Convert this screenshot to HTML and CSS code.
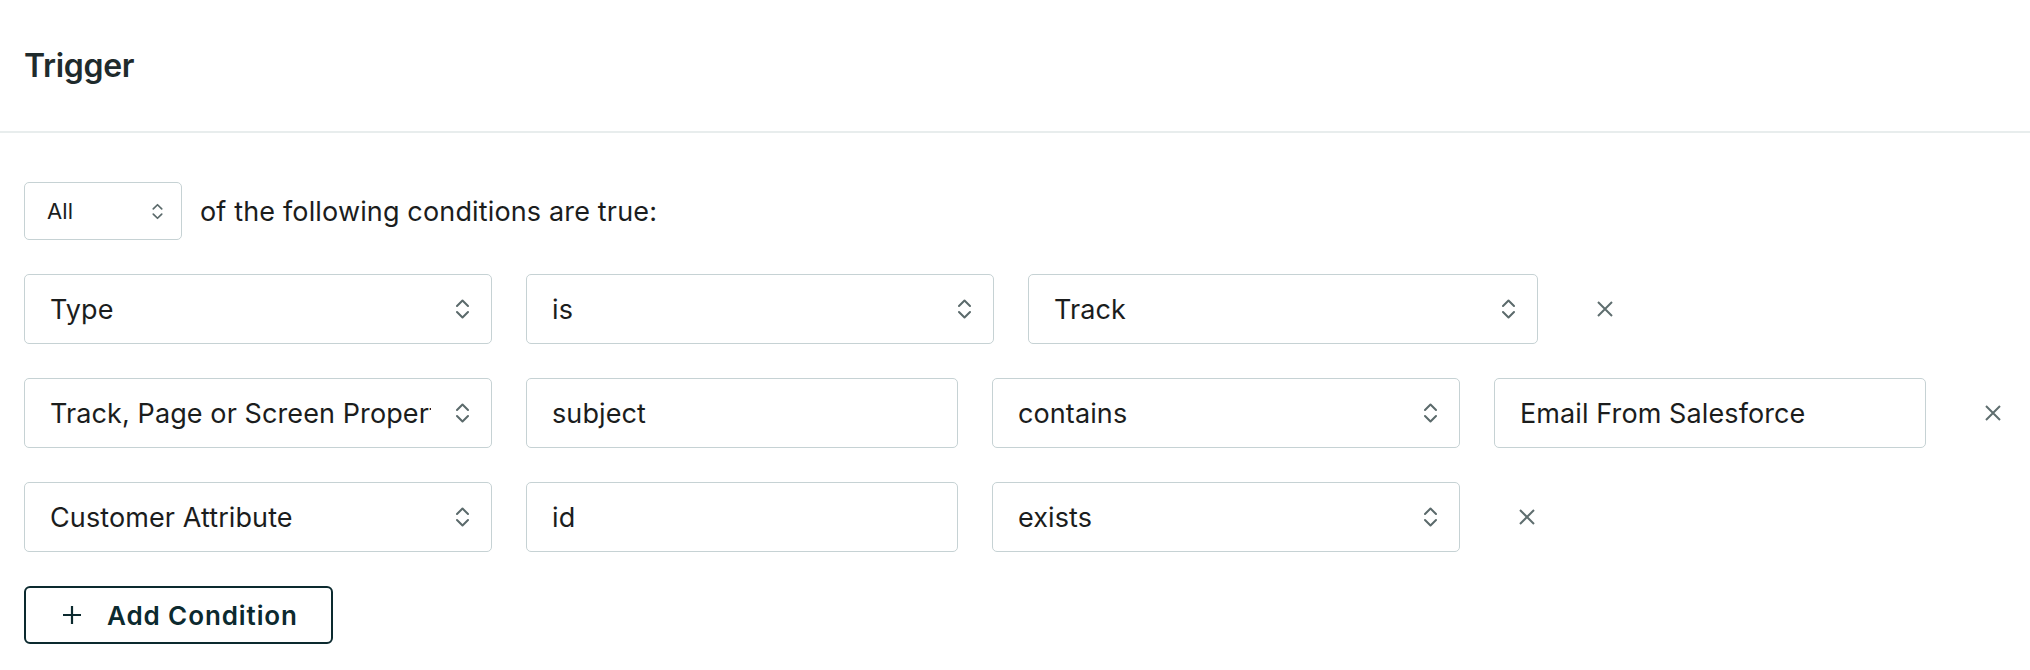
FILE: index.html
```html
<!DOCTYPE html>
<html lang="en">
<head>
<meta charset="utf-8">
<title>Trigger</title>
<link rel="stylesheet" href="styles.css">
</head>
<body>
<div class="panel">
  <header class="panel-header">
    <h2 class="panel-title">Trigger</h2>
  </header>
  <section class="panel-body">
    <div class="match-row">
      <div class="field select small w-all">
        <span class="field-text">All</span>
        <svg class="chev chev-sm" viewBox="0 0 13 20"><path d="M1.5 7 L6.5 2 L11.5 7 M1.5 13 L6.5 18 L11.5 13"/></svg>
      </div>
      <span class="match-text">of the following conditions are true:</span>
    </div>

    <div class="cond-row">
      <div class="field select w-468">
        <span class="field-text">Type</span>
        <svg class="chev" viewBox="0 0 13 20"><path d="M1 7 L6.5 1.5 L12 7 M1 13 L6.5 18.5 L12 13"/></svg>
      </div>
      <div class="field select w-468">
        <span class="field-text">is</span>
        <svg class="chev" viewBox="0 0 13 20"><path d="M1 7 L6.5 1.5 L12 7 M1 13 L6.5 18.5 L12 13"/></svg>
      </div>
      <div class="field select w-510">
        <span class="field-text">Track</span>
        <svg class="chev" viewBox="0 0 13 20"><path d="M1 7 L6.5 1.5 L12 7 M1 13 L6.5 18.5 L12 13"/></svg>
      </div>
      <button class="remove" type="button" aria-label="Remove condition">
        <svg viewBox="0 0 16 16"><path d="M1 1 L15 15 M15 1 L1 15"/></svg>
      </button>
    </div>

    <div class="cond-row">
      <div class="field select w-468">
        <span class="field-text">Track, Page or Screen Property</span>
        <svg class="chev" viewBox="0 0 13 20"><path d="M1 7 L6.5 1.5 L12 7 M1 13 L6.5 18.5 L12 13"/></svg>
      </div>
      <div class="field input w-432">
        <span class="field-text">subject</span>
      </div>
      <div class="field select w-468">
        <span class="field-text">contains</span>
        <svg class="chev" viewBox="0 0 13 20"><path d="M1 7 L6.5 1.5 L12 7 M1 13 L6.5 18.5 L12 13"/></svg>
      </div>
      <div class="field input w-432">
        <span class="field-text">Email From Salesforce</span>
      </div>
      <button class="remove" type="button" aria-label="Remove condition">
        <svg viewBox="0 0 16 16"><path d="M1 1 L15 15 M15 1 L1 15"/></svg>
      </button>
    </div>

    <div class="cond-row">
      <div class="field select w-468">
        <span class="field-text">Customer Attribute</span>
        <svg class="chev" viewBox="0 0 13 20"><path d="M1 7 L6.5 1.5 L12 7 M1 13 L6.5 18.5 L12 13"/></svg>
      </div>
      <div class="field input w-432">
        <span class="field-text">id</span>
      </div>
      <div class="field select w-468">
        <span class="field-text">exists</span>
        <svg class="chev" viewBox="0 0 13 20"><path d="M1 7 L6.5 1.5 L12 7 M1 13 L6.5 18.5 L12 13"/></svg>
      </div>
      <button class="remove" type="button" aria-label="Remove condition">
        <svg viewBox="0 0 16 16"><path d="M1 1 L15 15 M15 1 L1 15"/></svg>
      </button>
    </div>

    <div class="actions">
      <button class="add-btn" type="button">
        <svg class="plus" viewBox="0 0 18 18"><path d="M9 0 V18 M0 9 H18"/></svg>
        <span>Add Condition</span>
      </button>
    </div>
  </section>
</div>
</body>
</html>
```

FILE: styles.css
```css
* { box-sizing: border-box; }

html, body {
  margin: 0;
  padding: 0;
  background: #ffffff;
}

body {
  font-family: Inter, "Noto Sans", "Liberation Sans", sans-serif;
  color: #1b1d1d;
}

.panel-header {
  height: 133px;
  padding: 0 24px;
  display: flex;
  align-items: center;
  border-bottom: 2px solid #e8eded;
}

.panel-title {
  margin: 0;
  font-size: 32px;
  font-weight: 600;
  color: #1f2b2c;
  letter-spacing: -0.3px;
}

.panel-body {
  padding: 49px 24px 0;
  display: flex;
  flex-direction: column;
  gap: 34px;
}

.match-row {
  display: flex;
  align-items: center;
  gap: 18px;
}

.match-text {
  font-size: 27px;
  letter-spacing: 0.15px;
  color: #1b1d1d;
}

.cond-row {
  display: flex;
  align-items: center;
  gap: 34px;
}

.field {
  height: 70px;
  border: 1.5px solid #c6d2d4;
  border-radius: 5px;
  background: #fff;
  display: flex;
  align-items: center;
  padding: 0 24px 0 25px;
  font-size: 27px;
  letter-spacing: 0.1px;
  color: #1b1d1d;
  flex: none;
}

.field.select {
  padding-right: 22px;
  gap: 25px;
}

.field-text {
  flex: 1;
  min-width: 0;
  white-space: nowrap;
  overflow: hidden;
}

.field.small {
  height: 58px;
  font-size: 22px;
  padding: 0 18px 0 22px;
}

.w-all { width: 158px; }
.w-468 { width: 468px; }
.w-432 { width: 432px; }
.w-510 { width: 510px; }

.chev {
  width: 13px;
  height: 20px;
  flex: none;
  fill: none;
  stroke: #5b6a6b;
  stroke-width: 2;
  stroke-linecap: round;
  stroke-linejoin: round;
}

.chev-sm {
  width: 11px;
  height: 17px;
}

.remove {
  flex: none;
  width: 66px;
  height: 50px;
  border: 0;
  background: none;
  padding: 0;
  display: flex;
  align-items: center;
  justify-content: center;
  cursor: pointer;
}

.remove svg {
  width: 16px;
  height: 16px;
  fill: none;
  stroke: #5f6e6f;
  stroke-width: 2;
}

.actions {
  display: flex;
}

.add-btn {
  height: 58px;
  display: flex;
  align-items: center;
  gap: 26px;
  padding: 0 33px 0 37px;
  border: 2px solid #0c2a2f;
  border-radius: 6px;
  background: #fff;
  color: #0c2a2f;
  font-family: Inter, "Noto Sans", "Liberation Sans", sans-serif;
  font-size: 26px;
  font-weight: 600;
  letter-spacing: 0.9px;
  cursor: pointer;
}

.plus {
  width: 18px;
  height: 18px;
  flex: none;
  fill: none;
  stroke: #0c2a2f;
  stroke-width: 2.2;
}
```
